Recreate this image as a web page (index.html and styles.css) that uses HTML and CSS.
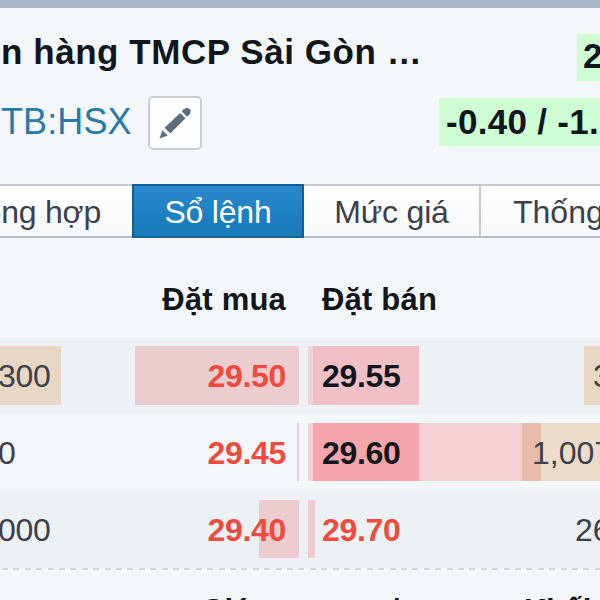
FILE: index.html
```
<!DOCTYPE html>
<html lang="vi">
<head>
    <meta charset="UTF-8">
    <meta name="viewport" content="width=device-width, initial-scale=1.0">
    <title>STB:HSX</title>
    <link rel="stylesheet" href="styles.css">
</head>
<body>
    <div class="topbar"></div>

    <header class="quote">
        <div class="quote-row name-row">
            <h1 class="name">n hàng TMCP Sài Gòn …</h1>
            <span class="last">2</span>
        </div>
        <div class="quote-row code-row">
            <a class="code">TB:HSX</a>
            <button class="edit">
                <svg width="32" height="32" viewBox="0 0 32 32" fill="#5b6c7c">
                    <path d="M0.5 31.5L3.4 23.2L8.8 28.6Z"/>
                    <path d="M5.6 20.8L21.2 6L26.4 11.2L11.2 26.4Z"/>
                    <path d="M22.8 4.4Q25 0.6 28.4 0.9Q31.8 1.4 31.6 4.7Q31.4 7.6 28.2 9.8Z"/>
                </svg>
            </button>
            <span class="change">-0.40 / -1.</span>
        </div>
    </header>

    <nav class="tabs">
        <a class="tab first">ông hợp</a>
        <a class="tab active">Sổ lệnh</a>
        <a class="tab price">Mức giá</a>
        <a class="tab last-tab">Thống</a>
    </nav>

    <section class="book">
        <div class="book-row head">
            <div class="bid">Đặt mua</div>
            <div class="ask">Đặt bán</div>
        </div>
        <div class="book-row odd row-1">
            <div class="volume"><span class="tan">300</span></div>
            <div class="bid down"><i class="bar"></i><b>29.50</b></div>
            <div class="ask"><i class="bar"></i><b>29.55</b></div>
            <div class="ask-volume"><span class="tan">3</span></div>
        </div>
        <div class="book-row row-2">
            <div class="volume"><span>0</span></div>
            <div class="bid down"><i class="bar"></i><b>29.45</b></div>
            <div class="ask"><i class="bar"></i><b>29.60</b></div>
            <div class="ask-volume"><span class="tan">1,007</span></div>
        </div>
        <div class="book-row odd row-3">
            <div class="volume"><span>000</span></div>
            <div class="bid down"><i class="bar"></i><b>29.40</b></div>
            <div class="ask down"><i class="bar"></i><b>29.70</b></div>
            <div class="ask-volume"><span>26</span></div>
        </div>
    </section>

    <div class="divider"></div>

    <section class="trades">
        <span class="th-price">Giá</span>
        <span class="th-change">+/-</span>
        <span class="th-volume">Khối</span>
    </section>
</body>
</html>
```

FILE: styles.css
```
* {
    box-sizing: border-box;
}

body {
    margin: 0;
    width: 600px;
    height: 600px;
    overflow: hidden;
    background: #f4f7fa;
    color: #11151c;
    font-family: "Liberation Sans", Arial, sans-serif;
    font-size: 32px;
    white-space: nowrap;
}

.topbar {
    height: 8px;
    background: #a9b4c5;
}

.quote {
    height: 176px;
    padding-top: 24px;
}

.quote-row {
    display: flex;
    align-items: flex-start;
}

.name-row {
    height: 64px;
    justify-content: space-between;
}

.name {
    margin: 0;
    padding-left: 1px;
    font-size: 35px;
    line-height: 40px;
    letter-spacing: 0.55px;
}

.last {
    width: 23px;
    height: 47px;
    margin-top: 2px;
    padding-left: 6px;
    overflow: hidden;
    background: #cefcd3;
    font-size: 35px;
    font-weight: bold;
    line-height: 44px;
}

.code {
    width: 148px;
    padding-left: 1px;
    color: #2979aa;
    font-size: 36px;
    line-height: 52px;
    letter-spacing: 0.1px;
}

.edit {
    width: 54px;
    height: 54px;
    padding: 0;
    display: flex;
    align-items: center;
    justify-content: center;
    background: #fdfeff;
    border: 2px solid #cbced2;
    border-radius: 5px;
}

.change {
    width: 161px;
    height: 48px;
    margin: 2px 0 0 auto;
    padding-left: 7px;
    overflow: hidden;
    background: #cefcd3;
    font-size: 35px;
    font-weight: bold;
    line-height: 48px;
    letter-spacing: 0.3px;
}

.tabs {
    height: 54px;
    display: flex;
}

.tab {
    height: 54px;
    border-top: 2px solid #c6c9cd;
    border-bottom: 2px solid #b9bdc2;
    background: linear-gradient(#ffffff, #f6f8fa);
    color: #3b404b;
    line-height: 52px;
    text-align: center;
}

/* label runs off the left edge */
.first {
    width: 132px;
    padding-right: 31px;
    display: flex;
    justify-content: flex-end;
    overflow: hidden;
    letter-spacing: -0.2px;
}

.active {
    width: 172px;
    background: linear-gradient(#2888cb, #187ab9);
    border: 2px solid #145f92;
    color: #ffffff;
    letter-spacing: -0.2px;
}

.price {
    width: 177px;
    border-right: 2px solid #c6c9cd;
    letter-spacing: -0.2px;
}

.last-tab {
    width: 119px;
    padding-left: 32px;
    overflow: hidden;
    text-align: left;
}

.book-row {
    position: relative;
    display: flex;
    height: 77px;
    padding: 9px 0;
    line-height: 60px;
}

.book-row.head {
    height: 99px;
    padding: 32px 0 0;
    font-size: 31px;
    font-weight: bold;
    letter-spacing: 0.2px;
}

.odd {
    background: #ebf1f5;
}

.volume {
    width: 134px;
    height: 59px;
    color: #3b404b;
}

.volume span {
    display: block;
    width: 61px;
    height: 58px;
    text-indent: -2px;
    letter-spacing: -0.3px;
}

.tan {
    background: #e9d7c5;
}

.bid {
    position: relative;
    width: 165px;
    height: 58px;
    padding-right: 13px;
    text-align: right;
}

.head .bid {
    width: 299px;
}

.ask {
    position: relative;
    width: 285px;
    height: 58px;
    padding-left: 23px;
}

.down {
    color: #ee4a3e;
}

b {
    position: relative;
    letter-spacing: -0.3px;
}

/* depth bars sit behind the prices */
.bar {
    position: absolute;
    top: 0;
    height: 58px;
}

.row-1 .bar {
    height: 59px;
}

.row-1 .ask-volume span,
.row-1 .volume span {
    height: 59px;
}

.bid .bar {
    right: 0;
    background: #edccd0;
}

.ask .bar {
    left: 9px;
}

.row-1 .bid .bar {
    width: 164px;
}

.row-2 .bid .bar {
    width: 2px;
}

.row-3 .bid .bar {
    width: 40px;
}

.row-1 .ask .bar {
    width: 111px;
    background: linear-gradient(90deg, #edd4d9 5px, #f1c0c6 5px);
}

.row-2 .ask .bar {
    width: 214px;
    background: linear-gradient(90deg, #f5d1d6 5px, #f6a6aa 5px, #f6a6aa 111px, #f5d1d6 111px);
}

.row-3 .ask .bar {
    width: 7px;
    background: #edccd0;
}

.ask-volume {
    flex: 1;
    min-width: 0;
    height: 59px;
    color: #3b404b;
    overflow: hidden;
}

.ask-volume span {
    display: block;
    height: 58px;
    padding-left: 9px;
}

.row-2 .ask {
    width: 223px;
}

.row-2 .ask-volume span {
    background: linear-gradient(90deg, #e8bcaa 19px, #eedccb 19px);
    padding-left: 10px;
}

.row-3 .ask {
    width: 267px;
}

.divider {
    height: 2px;
    background: repeating-linear-gradient(90deg, transparent 0, transparent 2px, #d3d8dd 2px, #d3d8dd 8px, transparent 8px, transparent 11.4px);
}

.trades {
    display: flex;
    height: 31px;
    padding: 23px 0 0 201px;
    overflow: hidden;
    font-size: 31px;
    font-weight: bold;
    letter-spacing: -0.5px;
}

.th-price {
    width: 172px;
}

.th-change {
    width: 151px;
}
```
